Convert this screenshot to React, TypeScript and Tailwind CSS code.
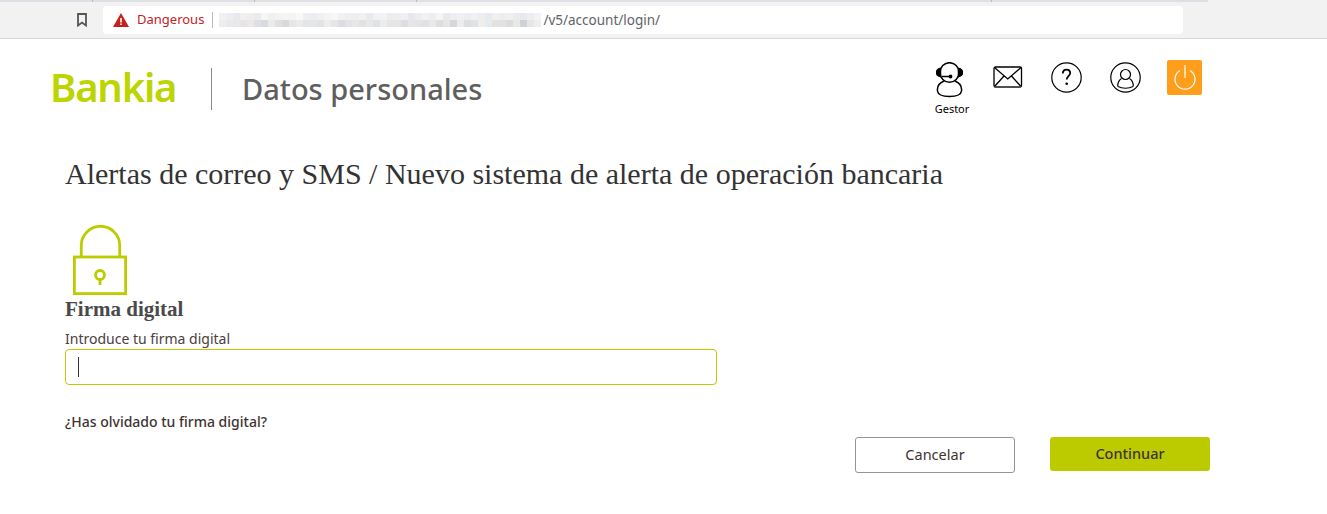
const blurTop = [
  "#f1f1f3", "#eeeef0", "#e9e9eb", "#f0f0f1", "#eeeeef", "#ebebed", "#f6f6f6", "#f1f1f2", "#f3f3f4", "#f5f5f6",
  "#f4f4f5", "#f8f8f8", "#efeff1", "#ededf0", "#f0f0f2", "#f3f5f4", "#f6f7f6", "#f1f1f2", "#efeff1", "#eeeeef",
  "#f1f1f3", "#e9ebeb", "#f2f2f4", "#f2f3f4", "#ededef", "#eeeeef", "#f0f0f2", "#e8e8ec", "#ededf0", "#f2f2f3",
  "#eeeef0", "#f5f5f5", "#e9e9eb", "#eeeef0", "#f0f0f2", "#ecedee", "#f1f1f3", "#eeeef0", "#eaeaec", "#f0f0f2",
  "#eeeeef", "#f0f0f1", "#ebebed", "#e9e9eb", "#eeeef0", "#f3f3f5",
];

const blurBottom = [
  "#ededee", "#e6eaee", "#e8e8ea", "#e8e4e4", "#ebe9e6", "#dcdfe6", "#d8dae2", "#ecebea", "#e0dfe2", "#d9d8dc",
  "#e6e6e8", "#ecebe9", "#e3e5e8", "#e3e6ea", "#e5e3e2", "#ededed", "#e4e6ea", "#dcdce2", "#e3e3e6", "#e8e6e6",
  "#e2e2e4", "#e6e8ea", "#e0e2e6", "#ececea", "#e5e6e8", "#e8e4e4", "#dddde2", "#e6e6ea", "#e4e4e8", "#dfe1e5",
  "#e9e9ea", "#dededf", "#e8e6e2", "#d6d7dc", "#ececed", "#dcdfe2", "#e0e2e4", "#eeeeec", "#e6ebee", "#e4e2df",
  "#e2e2e0", "#dcdcde", "#e8e8e6", "#cdd2d4", "#e6e6e8", "#eeeef0",
];

function BlurRow({ cells }: { cells: string[] }) {
  return (
    <div className="flex h-[7px]">
      {cells.map((color, i) => (
        <span key={i} className="w-[7px]" style={{ backgroundColor: color }} />
      ))}
    </div>
  );
}

function BookmarkIcon() {
  return (
    <svg width="10" height="14" viewBox="0 0 10 14" fill="none" stroke="#555" strokeWidth="1.800">
      <path d="M1 1h8v11.500L5 9.500l-4 3z" />
    </svg>
  );
}

function GestorIcon() {
  return (
    <svg width="27" height="36" viewBox="0 0 27 36" fill="none" stroke="#000" strokeWidth="1.500">
      <ellipse cx="13.500" cy="10.500" rx="9.500" ry="9.800" />
      <path d="M4.500 6.500a3.800 3.800 0 0 0 0 8z" fill="#000" />
      <path d="M22.500 6.500a3.800 3.800 0 0 1 0 8z" fill="#000" />
      <path d="M6 14.500h9" />
      <circle cx="14.500" cy="14.500" r="1.200" fill="#000" />
      <path d="M8 19C3 21 1 25 1.500 29c.5 4 5 5.500 12 5.500s11.500-1.500 12-5.500c.5-4-1.500-8-6.500-10" />
    </svg>
  );
}

function MailIcon() {
  return (
    <svg width="30" height="22" viewBox="0 0 30 22" fill="none" stroke="#000" strokeWidth="1.300">
      <rect x="1" y="1" width="27.500" height="20" rx="1.500" />
      <path d="M1.500 1.500 14.750 13 28 1.500M1.500 20.500l9.500-10.500M28 20.500 18.500 10" />
      <path d="M1.500 21h26.500" stroke="#555" strokeWidth="1.600" />
    </svg>
  );
}

function HelpIcon() {
  return (
    <svg width="31" height="31" viewBox="0 0 31 31" fill="none" stroke="#000" strokeWidth="1.200">
      <circle cx="15.500" cy="15.500" r="14.700" />
      <path d="M11.800 11.500c0-2.400 1.600-3.800 3.700-3.800s3.700 1.300 3.700 3.400c0 3-3.500 3.200-3.500 6.400" strokeWidth="1.800" />
      <circle cx="15.700" cy="21.800" r="1.300" fill="#000" stroke="none" />
    </svg>
  );
}

function UserIcon() {
  return (
    <svg width="31" height="31" viewBox="0 0 31 31" fill="none" stroke="#000" strokeWidth="1.200">
      <circle cx="15.500" cy="15.500" r="14.700" />
      <circle cx="15.500" cy="12.500" r="5" />
      <path d="M11.500 16.500c-2.600 1.500-3.800 4.500-3.800 8M19.500 16.500c2.600 1.500 3.800 4.500 3.800 8" />
      <path d="M8 24.500c4 2.300 11 2.300 15 0" />
    </svg>
  );
}

function LockIcon() {
  return (
    <svg width="54" height="70" viewBox="0 0 54 70" fill="none" stroke="#bccc00" strokeWidth="2.800">
      <path d="M8.250 32V20.500a19.250 19.250 0 0 1 38.500 0V32" />
      <rect x="1.400" y="32" width="51.200" height="36.600" />
      <circle cx="27" cy="50" r="4.500" />
      <path d="M27 54.500V60" />
    </svg>
  );
}

export default function App() {
  return (
    <div className="h-[514px] w-[1327px] overflow-hidden bg-white font-['Noto_Sans',sans-serif]">
      <div className="relative flex h-[39px] items-start border-b border-[#d8d8d8] bg-[#f2f2f2] pt-[6px]">
        <div className="absolute top-0 left-0 h-[2px] w-[1208px] bg-[#dcdfe3]" />
        <div className="absolute top-0 left-[92px] h-[2px] w-px bg-[#b8bcc2]" />
        <div className="absolute top-0 left-[254px] h-[2px] w-px bg-[#b8bcc2]" />
        <div className="absolute top-0 left-[416px] h-[2px] w-px bg-[#b8bcc2]" />
        <div className="absolute top-0 left-[991px] h-[2px] w-px bg-[#b8bcc2]" />
        <div className="flex w-[103px] justify-center pl-[60px] pt-[7px]">
          <BookmarkIcon />
        </div>
        <div className="flex h-[28px] w-[1080px] items-center rounded-[4px] bg-white pl-[10px] text-[13px]">
          <svg width="16" height="14" viewBox="0 0 16 14" fill="#c5221f">
            <path d="M8 0 16 14H0z" />
            <path d="M7.200 5h1.600v4.500H7.200zM7.200 10.500h1.600V12H7.200z" fill="#fff" />
          </svg>
          <span className="ml-[8px] text-[#c5221f]">Dangerous</span>
          <span className="ml-[8px] h-[16px] w-px bg-[#bdbdbd]" />
          <div className="ml-[6px] w-[324px]">
            <BlurRow cells={blurTop} />
            <BlurRow cells={blurBottom} />
          </div>
          <span className="text-[13.500px] text-[#5f6368]">/v5/account/login/</span>
        </div>
      </div>

      <header className="flex h-[101px] items-start pl-[50px] pt-px">
        <div className="mt-[22px] w-[127px] text-[40px] leading-[50px] font-semibold tracking-[-1.200px] text-[#bcd400]">
          Bankia
        </div>
        <div className="mt-[28px] ml-[34px] h-[42px] w-px bg-[#8a8a8a]" />
        <h1 className="mt-[28px] ml-[30px] text-[29px] leading-[42px] font-medium text-[#5f5f5f]">Datos personales</h1>
        <div className="ml-auto flex items-start pr-[125px] pt-[20px]">
          <div className="flex w-[40px] -translate-x-px flex-col items-center">
            <div className="mt-[2px] mr-[6px]">
              <GestorIcon />
            </div>
            <span className="mt-[4px] text-[11px] leading-[14px] text-black">Gestor</span>
          </div>
          <div className="ml-[20px] mt-[6px]">
            <MailIcon />
          </div>
          <div className="ml-[28px] mt-[2px]">
            <HelpIcon />
          </div>
          <div className="ml-[28px] mt-[2px]">
            <UserIcon />
          </div>
          <div className="ml-[26px] flex h-[35px] w-[35px] items-center justify-center rounded-[2px] bg-[#ff9e1b]">
            <svg width="24" height="26" viewBox="0 0 24 26" fill="none" stroke="#fff" strokeWidth="1.200">
              <path d="M7 5.500a10 10 0 1 0 10 0" />
              <path d="M12 0v13" />
            </svg>
          </div>
        </div>
      </header>

      <main className="pl-[65px] pr-[117px]">
        <h2 className="mt-[15px] font-['Liberation_Serif',serif] text-[30px] leading-[38px] text-[#333]">
          Alertas de correo y SMS / Nuevo sistema de alerta de operación bancaria
        </h2>
        <div className="mt-[32px] ml-[8px]">
          <LockIcon />
        </div>
        <h3 className="mt-[2px] font-['Liberation_Serif',serif] text-[21px] leading-[24px] font-bold text-[#4a4a4a]">Firma digital</h3>
        <label className="mt-[8px] block text-[14px] leading-[20px] text-[#4a4040]">Introduce tu firma digital</label>
        <div className="flex h-[36px] w-[652px] items-center rounded-[4px] border border-[#bccc00] pl-[12px]">
          <span className="h-[20px] w-px bg-[#333]" />
        </div>
        <div className="flex items-start justify-between">
          <a className="mt-[27px] text-[14px] leading-[20px] font-medium text-[#3e3330]">¿Has olvidado tu firma digital?</a>
          <div className="mt-[52px] flex items-start gap-[35px]">
            <button className="h-[36px] w-[160px] rounded-[3px] border border-[#9a9490] bg-white text-[14.500px] text-[#3e3330]">Cancelar</button>
            <button className="h-[34px] w-[160px] rounded-[3px] bg-[#bccb00] text-[14.500px] font-medium text-[#3e3330]">Continuar</button>
          </div>
        </div>
      </main>
    </div>
  );
}
